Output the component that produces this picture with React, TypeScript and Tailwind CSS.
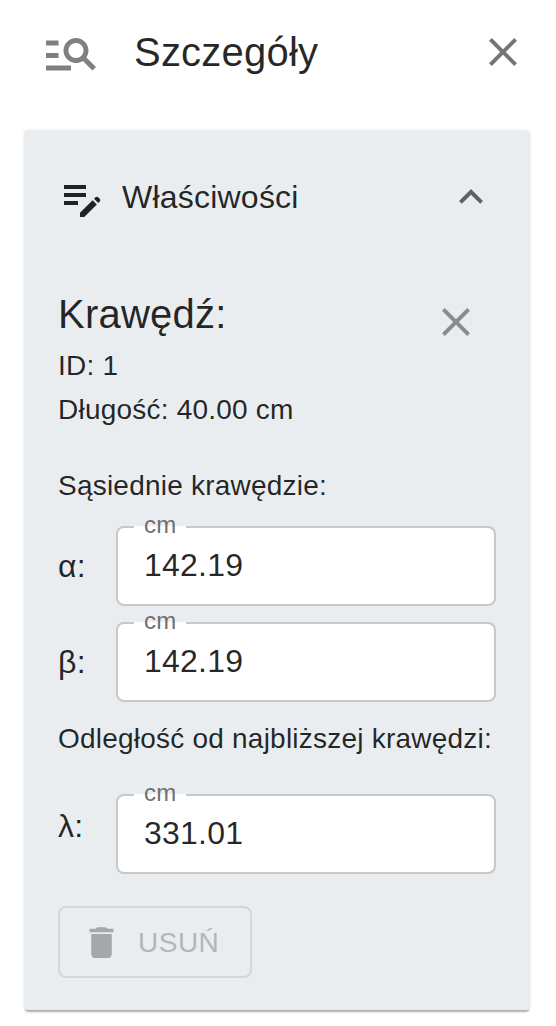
import { ReactNode } from "react";

function Icon({ d, className }: { d: string; className: string }) {
    return (
        <svg viewBox="0 0 24 24" fill="currentColor" className={className}>
            <path d={d} />
        </svg>
    );
}

const closePath = "M19 6.41L17.59 5 12 10.59 6.41 5 5 6.41 10.59 12 5 17.59 6.41 19 12 13.41 17.59 19 19 17.59 13.41 12z";
const searchPath = "M7 9H2V7h5v2zm0 3H2v2h5v-2zm13.59 7-3.83-3.83c-.8.52-1.74.83-2.76.83-2.76 0-5-2.24-5-5s2.24-5 5-5 5 2.24 5 5c0 1.02-.31 1.96-.83 2.75L22 17.59 20.59 19zM17 11c0-1.65-1.35-3-3-3s-3 1.35-3 3 1.35 3 3 3 3-1.35 3-3zM2 19h10v-2H2v2z";
const editNotePath = "M3 10h11v2H3v-2zm0-2h11V6H3v2zm0 8h7v-2H3v2zm15.01-3.13.71-.71c.39-.39 1.02-.39 1.41 0l.71.71c.39.39.39 1.02 0 1.41l-.71.71-2.12-2.12zm-.71.71L11 19.88V22h2.12l6.3-6.3-2.12-2.12z";
const chevronPath = "M12 8l-6 6 1.41 1.41L12 10.83l4.59 4.58L18 14z";
const trashPath = "M6 19c0 1.1.9 2 2 2h8c1.1 0 2-.9 2-2V7H6v12zM19 4h-3.5l-1-1h-5l-1 1H5v2h14V4z";

function Field({ label, value, labelClass = "" }: { label: ReactNode; value: string; labelClass?: string }) {
    return (
        <div className="flex items-center">
            <span className={`w-[58px] text-[32px] leading-[40px] ${labelClass}`}>{label}</span>
            <div className="relative h-[80px] w-[380px] rounded-lg border-2 border-[#c8c8c8] bg-white">
                <div className="absolute -top-[2px] left-[16px] h-[2px] w-[52px] bg-white" />
                <span className="absolute -top-[19px] left-[26px] text-[24px] leading-[32px] text-[#707070]">cm</span>
                <input
                    readOnly
                    value={value}
                    className="h-full w-full bg-transparent pb-[2px] pl-[26px] text-[32px] text-black/85 outline-none"
                />
            </div>
        </div>
    );
}

export default function App() {
    return (
        <div className="h-[1026px] w-[556px] overflow-hidden bg-white font-['Liberation_Sans',sans-serif] tracking-[0.22px] text-black/85">
            <header className="flex h-[130px] items-start pl-[41px] pr-[29px] pt-[23px]">
                <Icon d={searchPath} className="h-[60px] w-[60px] text-[#808080]" />
                <h1 className="ml-[33px] -mt-[1px] text-[40px] leading-[60px]">Szczegóły</h1>
                <Icon d={closePath} className="ml-auto mt-[5px] h-[48px] w-[48px] text-[#757575]" />
            </header>

            <section className="ml-6 h-[880px] w-[506px] rounded-[4px] bg-[#e9edf0] shadow-[0_3px_2px_-1px_rgba(0,0,0,0.3),0_0_4px_0_rgba(0,0,0,0.06)]">
                <div className="flex h-[134px] items-center pl-[34px] pr-[35px]">
                    <Icon d={editNotePath} className="h-[48px] w-[48px] text-[#222222]" />
                    <span className="ml-[16px] text-[32px] leading-[48px]">Właściwości</span>
                    <Icon d={chevronPath} className="ml-auto h-[48px] w-[48px] text-[#616161]" />
                </div>

                <div className="pl-[34px] pr-[34px]">
                    <div className="flex items-start justify-between">
                        <h2 className="mt-[26px] text-[40px] leading-[48px]">Krawędź:</h2>
                        <Icon d={closePath} className="mr-[16px] mt-[34px] h-[48px] w-[48px] text-[#8a8b8c]" />
                    </div>
                    <p className="-mt-[2px] text-[28px] leading-[44px]">ID: 1</p>
                    <p className="text-[28px] leading-[44px]">Długość: 40.00 cm</p>
                    <p className="mb-[18px] mt-[32px] text-[28px] leading-[44px]">Sąsiednie krawędzie:</p>

                    <div className="flex flex-col gap-[16px]">
                        <Field label="α:" value="142.19" />
                        <Field label="β:" value="142.19" />
                    </div>

                    <p className="mb-[33px] mt-[15px] text-[28px] leading-[44px]">Odległość od najbliższej krawędzi:</p>
                    <Field label="λ:" value="331.01" labelClass="-mt-[16px]" />

                    <button
                        disabled
                        className="mt-[32px] flex h-[72px] w-[194px] items-center rounded-lg border-2 border-[#d4d6d9] pl-[21px] text-[28px] text-[#b4b6b9]"
                    >
                        <Icon d={trashPath} className="h-[41px] w-[41px] text-[#a6a7a9]" />
                        <span className="ml-[16px] mt-[2px] tracking-[0.5px]">USUŃ</span>
                    </button>
                </div>
            </section>
        </div>
    );
}
